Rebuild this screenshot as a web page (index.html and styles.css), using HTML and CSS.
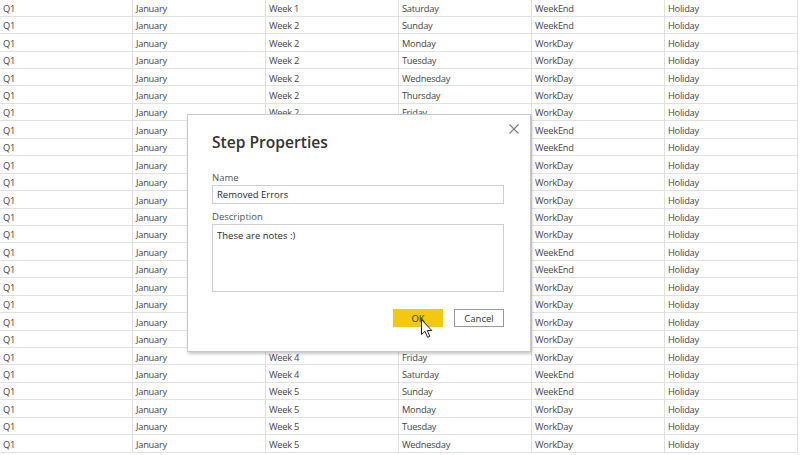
FILE: index.html
```html
<!DOCTYPE html>
<html lang="en">
<head>
  <meta charset="UTF-8" />
  <title>Step Properties</title>
  <link rel="stylesheet" href="styles.css">
</head>
<body>
  <div class="grid" id="grid"></div>

  <div class="dialog">
    <button class="close" aria-label="Close">
      <svg width="10" height="10" viewBox="0 0 10 10"><path d="M0.5 0.5 L9.5 9.5 M9.5 0.5 L0.5 9.5" stroke="#7a7a7a" stroke-width="1.1" fill="none"/></svg>
    </button>
    <h1 class="title">Step Properties</h1>

    <div class="label">Name</div>
    <div class="field">Removed Errors</div>

    <div class="label">Description</div>
    <div class="field area">These are notes :)</div>

    <div class="actions">
      <button class="btn ok">OK</button>
      <button class="btn cancel">Cancel</button>
    </div>
  </div>

  <svg class="cursor" width="12" height="19" viewBox="0 0 12 19">
    <path d="M0.5 0.5 L0.5 15.5 L4 12.3 L6.6 18.3 L8.8 17.3 L6.3 11.5 L10.8 11.5 Z" fill="#fff" stroke="#222" stroke-width="1" stroke-linejoin="round"/>
  </svg>

  <script>
    var rows = [
      ["Week 1", "Saturday", "WeekEnd"],
      ["Week 2", "Sunday", "WeekEnd"],
      ["Week 2", "Monday", "WorkDay"],
      ["Week 2", "Tuesday", "WorkDay"],
      ["Week 2", "Wednesday", "WorkDay"],
      ["Week 2", "Thursday", "WorkDay"],
      ["Week 2", "Friday", "WorkDay"],
      ["Week 2", "Saturday", "WeekEnd"],
      ["Week 3", "Sunday", "WeekEnd"],
      ["Week 3", "Monday", "WorkDay"],
      ["Week 3", "Tuesday", "WorkDay"],
      ["Week 3", "Wednesday", "WorkDay"],
      ["Week 3", "Thursday", "WorkDay"],
      ["Week 3", "Friday", "WorkDay"],
      ["Week 3", "Saturday", "WeekEnd"],
      ["Week 4", "Sunday", "WeekEnd"],
      ["Week 4", "Monday", "WorkDay"],
      ["Week 4", "Tuesday", "WorkDay"],
      ["Week 4", "Wednesday", "WorkDay"],
      ["Week 4", "Thursday", "WorkDay"],
      ["Week 4", "Friday", "WorkDay"],
      ["Week 4", "Saturday", "WeekEnd"],
      ["Week 5", "Sunday", "WeekEnd"],
      ["Week 5", "Monday", "WorkDay"],
      ["Week 5", "Tuesday", "WorkDay"],
      ["Week 5", "Wednesday", "WorkDay"]
    ];

    var grid = document.getElementById("grid");
    rows.forEach(function (r) {
      ["Q1", "January", r[0], r[1], r[2], "Holiday"].forEach(function (v) {
        var cell = document.createElement("div");
        cell.className = "cell";
        cell.textContent = v;
        grid.appendChild(cell);
      });
    });
  </script>
</body>
</html>
```

FILE: styles.css
```css
body {
  margin: 0;
  background: #fff;
  font-family: "Open Sans", "Noto Sans", sans-serif;
  overflow: hidden;
}
.grid {
  display: grid;
  grid-template-columns: repeat(6, 133px);
  grid-auto-rows: 17.45px;
  margin-top: -0.75px;
}
.cell {
  border-right: 1px solid #e1e1e1;
  border-bottom: 1px solid #e1e1e1;
  padding: 1.5px 0 0 3px;
  font-size: 9.3px;
  letter-spacing: -0.25px;
  line-height: 16px;
  color: #464646;
  white-space: nowrap;
  overflow: hidden;
}
.dialog {
  position: absolute;
  left: 187px;
  top: 114px;
  width: 344px;
  height: 238px;
  box-sizing: border-box;
  background: #fff;
  border: 1px solid #c9c9c9;
  box-shadow: 1px 2px 3px rgba(0, 0, 0, 0.22);
  padding: 17px 26px 0 24px;
}
.close {
  position: absolute;
  top: 5px;
  right: 9px;
  width: 14px;
  height: 14px;
  padding: 2px;
  border: none;
  background: none;
  cursor: pointer;
}
.title {
  margin: 0 0 19px;
  font-size: 15.6px;
  font-weight: 600;
  line-height: 20px;
  color: #333;
}
.label {
  font-size: 9.5px;
  line-height: 14px;
  color: #555;
}
.field {
  height: 19px;
  box-sizing: border-box;
  border: 1px solid #cfcfcf;
  padding: 0 4px;
  font-size: 9.5px;
  line-height: 17px;
  color: #2b2b2b;
  margin-bottom: 6px;
}
.field.area {
  height: 68px;
  padding-top: 2px;
  margin-bottom: 0;
}
.actions {
  display: flex;
  justify-content: flex-end;
  gap: 11px;
  margin-top: 17px;
}
.btn {
  width: 50px;
  height: 18px;
  box-sizing: border-box;
  padding: 0;
  font-family: inherit;
  font-size: 9.5px;
  color: #333;
  cursor: pointer;
}
.ok {
  background: #f2c811;
  border: 1px solid #f2c811;
}
.cancel {
  background: #fff;
  border: 1px solid #9a9a9a;
}
.cursor {
  position: absolute;
  left: 421px;
  top: 319px;
}
```
